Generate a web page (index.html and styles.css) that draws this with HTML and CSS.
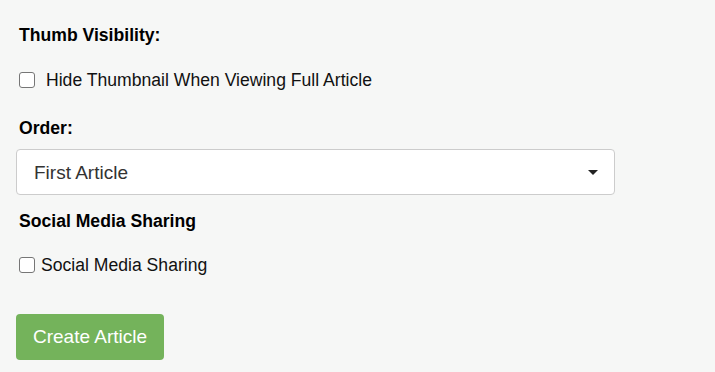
FILE: index.html
```html
<!DOCTYPE html>
<html lang="en">

<head>
    <meta charset="UTF-8">
    <meta name="viewport" content="width=device-width, initial-scale=1.0">
    <link rel="stylesheet" href="styles.css">
    <title>Create Article</title>
</head>

<body>
    <form class="article-form">
        <div class="group">
            <label class="title">Thumb Visibility:</label>
            <label class="check spaced"><input type="checkbox"> Hide Thumbnail When Viewing Full Article</label>
        </div>
        <div class="group">
            <label class="title" for="order">Order:</label>
            <div class="select-wrap">
                <select id="order" class="select">
                    <option>First Article</option>
                </select>
                <span class="caret"></span>
            </div>
        </div>
        <div class="group">
            <label class="title">Social Media Sharing</label>
            <label class="check share"><input type="checkbox">Social Media Sharing</label>
        </div>
        <button type="button" class="btn">Create Article</button>
    </form>
</body>

</html>
```

FILE: styles.css
```css
body {
    font-family: Arial, "Liberation Sans", sans-serif;
    background-color: #f6f7f6;
    color: #111;
    margin: 0;
    padding: 0 16px;
}

.article-form {
    width: 599px;
    padding-top: 25px;
}

.title {
    display: block;
    font-weight: bold;
    font-size: 17.6px;
    line-height: 20px;
    color: #000;
    padding-left: 3px;
}

.check {
    display: flex;
    align-items: center;
    font-size: 17.6px;
    line-height: 20px;
    padding-left: 3px;
    margin: 25px 0 28px;
    color: #111;
}

.check input {
    width: 16px;
    height: 16px;
    margin: 0 6px 0 0;
    border: 1px solid #767676;
    border-radius: 3px;
    appearance: none;
    background: #fff;
}

.check.spaced input {
    margin-right: 11px;
}

.check.share {
    margin-top: 24px;
}

.select-wrap {
    position: relative;
    margin: 11px 0 16px;
}

.select {
    width: 599px;
    height: 46px;
    padding: 0 17px;
    font-family: inherit;
    font-size: 19px;
    color: #333;
    background-color: #fff;
    border: 1px solid #ccc;
    border-radius: 4px;
    appearance: none;
}

.caret {
    position: absolute;
    right: 17px;
    top: 21px;
    width: 0;
    height: 0;
    border-left: 5px solid transparent;
    border-right: 5px solid transparent;
    border-top: 5px solid #222;
}

.btn {
    display: block;
    margin-top: 39px;
    width: 148px;
    height: 46px;
    padding: 0;
    font-family: inherit;
    font-size: 19px;
    color: #fff;
    background-color: #74b35b;
    border: none;
    border-radius: 4px;
    cursor: pointer;
}
```
